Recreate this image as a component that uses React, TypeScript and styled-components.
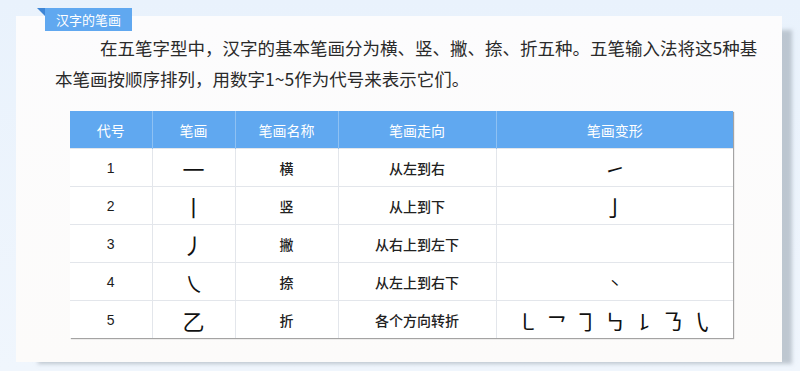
import React from 'react';
import styled, { createGlobalStyle } from 'styled-components';

const GlobalStyle = createGlobalStyle`
  html, body {
    margin: 0;
    padding: 0;
    background: #edf4fc;
  }
  body {
    font-family: "Noto Sans CJK SC", "Liberation Sans", sans-serif;
  }
`;

interface StrokeRow {
  code: string;
  stroke: string;
  name: string;
  direction: string;
  variants: string[];
  small?: boolean;
}

const rows: StrokeRow[] = [
  { code: '1', stroke: '一', name: '横', direction: '从左到右', variants: ['㇀'] },
  { code: '2', stroke: '丨', name: '竖', direction: '从上到下', variants: ['亅'] },
  { code: '3', stroke: '丿', name: '撇', direction: '从右上到左下', variants: [] },
  { code: '4', stroke: '㇏', name: '捺', direction: '从左上到右下', variants: ['㇔'], small: true },
  { code: '5', stroke: '乙', name: '折', direction: '各个方向转折', variants: ['㇄', '㇖', '㇆', '㇉', '㇙', '㇡', '㇂'] },
];

const columns = [82, 83, 103, 158, 237];
const headers = ['代号', '笔画', '笔画名称', '笔画走向', '笔画变形'];

const App: React.FC = () => {
  return (
    <Page>
      <GlobalStyle />
      <Card>
        <Tag>汉字的笔画</Tag>
        <Paragraph>
          在五笔字型中，汉字的基本笔画分为横、竖、撇、捺、折五种。五笔输入法将这5种基本笔画按顺序排列，用数字1~5作为代号来表示它们。
        </Paragraph>
        <Table>
          <colgroup>
            {columns.map((w, i) => (
              <col key={i} style={{ width: w }} />
            ))}
          </colgroup>
          <thead>
            <tr>
              {headers.map((h) => (
                <HeadCell key={h}>{h}</HeadCell>
              ))}
            </tr>
          </thead>
          <tbody>
            {rows.map((r) => (
              <tr key={r.code}>
                <CodeCell>{r.code}</CodeCell>
                <StrokeCell>{r.stroke}</StrokeCell>
                <TextCell>{r.name}</TextCell>
                <TextCell>{r.direction}</TextCell>
                <VariantCell>
                  <Variants>
                    {r.variants.map((v, i) => (
                      <Glyph key={i} $small={r.small}>
                        {v}
                      </Glyph>
                    ))}
                  </Variants>
                </VariantCell>
              </tr>
            ))}
          </tbody>
        </Table>
      </Card>
    </Page>
  );
};

export default App;

const Page = styled.div`
  width: 800px;
  height: 371px;
  padding: 16px 18px 0 16px;
  box-sizing: border-box;
  overflow: hidden;
  background: linear-gradient(180deg, #e9f2fc 0%, #f0f6fd 100%);
`;

const Card = styled.div`
  position: relative;
  width: 766px;
  height: 346px;
  box-sizing: border-box;
  padding: 16px 17px 0 39px;
  background: linear-gradient(180deg, #fcfcfd 0%, #fcfbfa 100%);
  box-shadow: 16px 8px 4px -6px rgba(150, 160, 172, 0.55);
`;

const Tag = styled.div`
  position: absolute;
  top: -8px;
  left: 29px;
  height: 23px;
  padding: 0 11px;
  background: #60a8f0;
  color: #ffffff;
  font-size: 13px;
  line-height: 23px;

  &::before {
    content: '';
    position: absolute;
    left: -8px;
    top: 0;
    border-style: solid;
    border-width: 0 8px 8px 0;
    border-color: transparent #3f86d6 transparent transparent;
  }
`;

const Paragraph = styled.p`
  margin: 0;
  font-size: 17.5px;
  line-height: 31px;
  color: #2a2a2a;
  text-indent: 45px;
`;

const Table = styled.table`
  margin: 17px 0 0 15px;
  width: 663px;
  table-layout: fixed;
  border-collapse: collapse;
  background: #ffffff;
  box-shadow: 1px 1px 1px rgba(0, 0, 0, 0.35);
  font-family: "Liberation Sans", "Noto Sans CJK SC", sans-serif;
`;

const HeadCell = styled.th`
  height: 37px;
  padding: 0;
  background: #60a8f0;
  color: #ffffff;
  font-size: 14px;
  font-weight: 400;
  text-align: center;
  border-left: 1px solid #8ec1f3;

  &:first-child {
    border-left: none;
  }
`;

const Cell = styled.td`
  height: 37px;
  padding: 0;
  text-align: center;
  color: #222;
  border: 1px solid #e3e6eb;

  &:first-child {
    border-left: none;
  }
  &:last-child {
    border-right: none;
  }
  tr:last-child > & {
    border-bottom: none;
  }
`;

const CodeCell = styled(Cell)`
  font-size: 14px;
  color: #1c1c1c;
`;

const StrokeCell = styled(Cell)`
  font-family: "Noto Sans CJK SC", sans-serif;
  font-size: 22px;
  color: #111;
`;

const TextCell = styled(Cell)`
  font-family: "Noto Sans CJK SC", sans-serif;
  font-size: 14px;
  font-weight: 500;
  color: #222;
`;

const VariantCell = styled(Cell)`
  font-family: "Noto Sans CJK SC", sans-serif;
`;

const Variants = styled.div`
  display: flex;
  justify-content: center;
  align-items: center;
  gap: 7px;
`;

const Glyph = styled.span<{ $small?: boolean }>`
  font-size: ${(p) => (p.$small ? '14px' : '22px')};
  line-height: 1;
  color: #111;
`;
